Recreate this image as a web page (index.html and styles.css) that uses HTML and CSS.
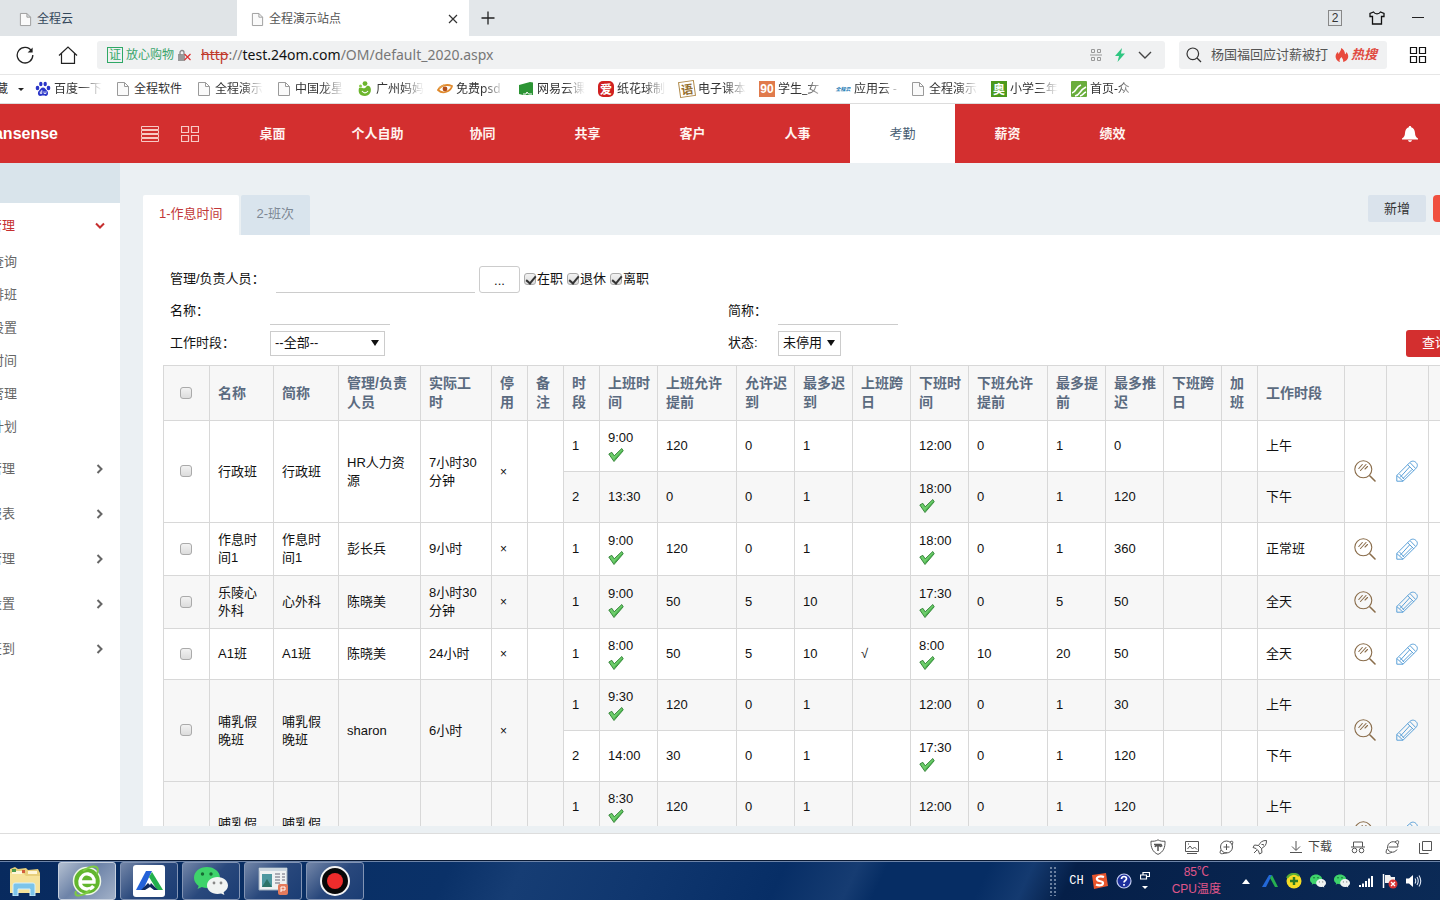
FILE: index.html
```html
<!DOCTYPE html>
<html lang="zh-CN">
<head>
<meta charset="utf-8">
<title>全程演示站点</title>
<link rel="stylesheet" href="styles.css">
</head>
<body>
<svg class="sprite" aria-hidden="true">
  <symbol id="i-page" viewBox="0 0 14 16"><path d="M1.5 1.5h7l4 4v9h-11z M8.5 1.5v4h4" fill="#fafafa" stroke="#9a9a9a"/></symbol>
  <symbol id="i-tick" viewBox="0 0 16 16"><path d="M.8 7 3.800 5.300l2.400 3.500L13.800 1.500 15.200 3.800 6 14.500z" fill="#6ccd6a" stroke="#2c7d31" stroke-width=".9" stroke-linejoin="round"/><path d="M6.300 12.600 14.500 3.800" fill="none" stroke="#3aa040" stroke-width=".9"/></symbol>
  <symbol id="i-view" viewBox="0 0 22 22"><g fill="none" stroke="#8a6d4b" stroke-width="1.100" stroke-linecap="round"><circle cx="9.300" cy="9.300" r="8.500"/><path d="m4.800 8.500 3.500-4m-1.800 6 5.500-6m-1 4.500 2.500-2.500"/><path d="m16 16 5 5" stroke-width="1.600"/></g></symbol>
  <symbol id="i-edit" viewBox="0 0 22 22"><g fill="none" stroke="#5aa0d8" stroke-width="1" stroke-linejoin="round"><path d="M.8 21.200V15.500L13.500 2.800C15.500.7 18 .6 20 2.500s1.600 4.300-.3 6.200L7 21.200z"/><path d="m.8 15.500 6.200 5.700M11.500 4.600l6.300 6.200M14 2.600l5.600 5.800M4 17.500l9.500-10.500M7 18.500l9-9M3.500 14 8 19"/></g></symbol>
  <symbol id="i-wechat" viewBox="0 0 34 28"><path d="M13 0C5.500 0 0 4.700 0 10.700c0 3.400 1.800 6.200 4.700 8.200L3.500 22l4.300-2c1.600.6 3.300.9 5.200.9 7.500 0 13-4.500 13-10.200S20.500 0 13 0z" fill="#3ed36b"/><circle cx="8.500" cy="7" r="1.700" fill="#176b33"/><circle cx="17" cy="7" r="1.700" fill="#176b33"/><path d="M23.500 10c-6 0-10.500 3.800-10.500 8.500s4.500 8.400 10.500 8.400c1.300 0 2.500-.2 3.600-.5l3.300 1.600-.8-2.800c2.700-1.600 4.400-4 4.400-6.700 0-4.700-4.500-8.500-10.500-8.500z" fill="#f0f3f2"/><circle cx="20" cy="16" r="1.400" fill="#888"/><circle cx="27" cy="16" r="1.400" fill="#888"/></symbol>
  <symbol id="i-chev" viewBox="0 0 8 10"><path d="m1.500 1 4 4-4 4" fill="none" stroke="currentColor" stroke-width="2"/></symbol>
</svg>

<div class="tabs">
  <div class="tab"><svg class="page"><use href="#i-page"/></svg><span>全程云</span></div>
  <div class="tab tab-on"><svg class="page"><use href="#i-page"/></svg><span>全程演示站点</span>
    <button class="plain tab-close" aria-label="关闭"><svg width="10" height="10"><path d="m1 1 8 8m0-8-8 8" stroke="#333" stroke-width="1.200"/></svg></button></div>
  <button class="plain tab-add" aria-label="新标签"><svg width="14" height="14"><path d="M7 .5v13M.5 7h13" stroke="#222" stroke-width="1.300"/></svg></button>
  <div class="win">
    <span class="win-count">2</span>
    <svg width="16" height="14" viewBox="0 0 16 14"><path d="M4.500 1 1 2.500v3h2.500V13h9V5.500H15v-3L11.500 1c-.8 1.200-2 1.800-3.500 1.800S5.300 2.200 4.500 1z" fill="none" stroke="#111" stroke-width="1.300"/></svg>
    <svg width="12" height="14"><path d="M0 6.500h12" stroke="#222"/></svg>
  </div>
</div>

<div class="address">
  <button class="plain" aria-label="刷新"><svg width="18" height="18" viewBox="0 0 18 18"><path d="M15.600 5A7.800 7.800 0 1 0 16.800 9" fill="none" stroke="#222" stroke-width="1.300"/><path d="M16.600 1.500v5h-5z" fill="#222"/></svg></button>
  <button class="plain" aria-label="主页"><svg width="20" height="18" viewBox="0 0 20 18"><path d="M1 9.500 10 1l9 8.500M3.500 7.500v9.800h13V7.500" fill="none" stroke="#222" stroke-width="1.200"/></svg></button>
  <div class="urlbox">
    <span class="cert">证</span><span class="safe">放心购物</span>
    <svg width="15" height="13" viewBox="0 0 15 13"><path d="M1 5h7v7H1z" fill="#999"/><path d="M3 6V3.500a2 2 0 0 1 4 0V5" fill="none" stroke="#888" stroke-width="1.300"/><path d="m7.500 5 6 6m0-6-6 6" stroke="#d33" stroke-width="1.200"/></svg>
    <span class="url"><s>http</s>://<b>test.24om.com</b>/OM/default_2020.aspx</span>
    <svg class="qr" width="12" height="12" viewBox="0 0 12 12"><path d="M1.500.5h3v3h-3zM7.500.5h3v3h-3zM1.500 8.500h3v3h-3zM7.500 8.500h3v3h-3zM0 6h12" fill="none" stroke="#999"/></svg>
    <svg width="12" height="14" viewBox="0 0 12 14"><path d="M8 0 1 8h4l-1.500 6L11 5.500H7z" fill="#2fc681"/></svg>
    <svg width="14" height="8" viewBox="0 0 14 8"><path d="m1 1 6 6 6-6" fill="none" stroke="#444" stroke-width="1.400"/></svg>
  </div>
  <div class="search">
    <svg width="16" height="16" viewBox="0 0 16 16"><circle cx="6.800" cy="6.800" r="5.800" fill="none" stroke="#333" stroke-width="1.200"/><path d="m11 11 4 4" stroke="#333" stroke-width="1.300"/></svg>
    <span class="search-text">杨国福回应讨薪被打</span>
    <svg width="14" height="14" viewBox="0 0 14 14"><path d="M6 0c.5 3-2 3.700-2 6-.8-.4-1-1.300-.9-2.200C1 5.500.3 7.500.7 9.500 1.200 12 3 13.700 5 14c-1.200-2 0-3.800 1.800-5 .1 1.500 1.800 2 1.400 5 2.600-.5 4.700-2.600 5-5 .2-2-.6-3.800-2-5 0 1.200-.5 2-1.200 2.200C10 3.500 8.500 1 6 0z" fill="#e8493c"/></svg>
    <em class="hot">热搜</em>
  </div>
  <button class="plain apps" aria-label="应用"><svg width="18" height="18" viewBox="0 0 18 18"><path d="M1.500 1.500h6v6h-6zM10.500 1.500h6v6h-6zM1.500 10.500h6v6h-6zM10.500 10.500h6v6h-6z" fill="none" stroke="#111" stroke-width="1.200"/></svg></button>
</div>

<nav class="bookmarks">
  <span class="fav">藏</span><span class="caret"></span>
  <a href="#" class="bm"><svg viewBox="0 0 16 16"><g fill="#2a35c8"><ellipse cx="2.500" cy="7" rx="1.800" ry="2.200"/><ellipse cx="5.800" cy="3" rx="1.700" ry="2.300"/><ellipse cx="10.200" cy="3" rx="1.700" ry="2.300"/><ellipse cx="13.500" cy="7" rx="1.800" ry="2.200"/><path d="M8 6.500c2 0 2.800 2 4 3.200 1.500 1.400 1.600 5-1.200 5.200-1.200 0-1.600-.4-2.800-.4s-1.600.4-2.800.4C2.400 14.700 2.500 11 4 9.700 5.200 8.500 6 6.500 8 6.500z"/></g><path d="M6.800 9v3.500H5.300v-1.600h1.500M9 10.300v2.200h2v-2.200" fill="none" stroke="#fff" stroke-width=".8"/></svg><span class="fade">百度一下</span></a>
  <a href="#" class="bm"><svg><use href="#i-page"/></svg><span>全程软件</span></a>
  <a href="#" class="bm"><svg><use href="#i-page"/></svg><span class="fade">全程演示</span></a>
  <a href="#" class="bm"><svg><use href="#i-page"/></svg><span class="fade">中国龙星</span></a>
  <a href="#" class="bm"><svg viewBox="0 0 16 16"><path d="M2 7c3-1 4 1 6 0s1-3 4-2c3 1 3 10-4 10C2 15 1 11 2 7z" fill="#6cb52d"/><circle cx="8" cy="2.600" r="2.400" fill="#6cb52d"/><circle cx="3.500" cy="5" r="1.500" fill="#8ccc4a"/><path d="M5 10c2 2.500 4 2.500 6 0" fill="none" stroke="#fff" stroke-width="1.200"/></svg><span class="fade">广州妈妈</span></a>
  <a href="#" class="bm"><svg viewBox="0 0 16 16"><path d="M1 9c3-5 9-6 14-4-1 5-9 9-14 4z" fill="none" stroke="#e08a2c" stroke-width="1.800"/><circle cx="8" cy="8" r="2.400" fill="#b4501c"/><path d="m2 7 5-3" stroke="#e6a04c" stroke-width="1.500"/></svg><span class="fade">免费psd</span></a>
  <a href="#" class="bm"><svg viewBox="0 0 16 16"><path d="M1 4 12 1l3 .5V14H5l-4-1z" fill="#2c9434"/><path d="M5 13h3l1-2 1.500 2H14" fill="none" stroke="#fff"/></svg><span class="fade">网易云课</span></a>
  <a href="#" class="bm"><i class="fi fi-ai">爱</i><span class="fade">纸花球制</span></a>
  <a href="#" class="bm"><i class="fi fi-yu">语</i><span class="fade">电子课本</span></a>
  <a href="#" class="bm bm-90"><i class="fi fi-90">90</i><span class="fade">学生_女</span></a>
  <a href="#" class="bm bm-cloud"><i class="fi fi-cloud">全程云</i><span class="fade">应用云 -</span></a>
  <a href="#" class="bm"><svg><use href="#i-page"/></svg><span class="fade">全程演示</span></a>
  <a href="#" class="bm"><i class="fi fi-ao">奥</i><span class="fade">小学三年</span></a>
  <a href="#" class="bm"><svg viewBox="0 0 16 16"><rect width="16" height="16" rx="1" fill="#6aad3c"/><path d="M1 12c5-1 3-6 9-8M4 15c6-1 3-5 11-9M9 15c4-1 3-3 6-4" fill="none" stroke="#fff" stroke-width="1.600"/></svg><span class="fade">首页-众</span></a>
</nav>

<header class="topbar">
  <div class="brand">Mansense</div>
  <button class="plain" aria-label="列表"><svg width="18" height="16" viewBox="0 0 18 16"><path d="M.5.5h17v3H.5zM.5 4.500h17v3H.5zM.5 8.500h17v3H.5zM.5 12.500h17v3H.5z" fill="none" stroke="#f8c9c5"/></svg></button>
  <button class="plain" aria-label="网格"><svg width="18" height="16" viewBox="0 0 18 16"><path d="M.5.5h7v6h-7zM10.500.5h7v6h-7zM.5 9.500h7v6h-7zM10.500 9.500h7v6h-7z" fill="none" stroke="#f8c9c5" stroke-width="1.200"/></svg></button>
  <nav class="menu">
    <a href="#">桌面</a><a href="#">个人自助</a><a href="#">协同</a><a href="#">共享</a><a href="#">客户</a><a href="#">人事</a><a href="#" class="on">考勤</a><a href="#">薪资</a><a href="#">绩效</a>
  </nav>
  <button class="plain bell" aria-label="通知"><svg width="16" height="16" viewBox="0 0 16 16"><path d="M8 0c.8 0 1.200.5 1.200 1.200C11.600 1.800 12.800 4 13 7c.2 3 .8 4 3 5.500v1H0v-1C2.200 11 2.800 10 3 7c.2-3 1.400-5.200 3.800-5.800C6.800.5 7.200 0 8 0zM6 14.300h4c-.3 1.100-1 1.700-2 1.700s-1.700-.6-2-1.700z" fill="#fff"/></svg></button>
</header>

<main class="body">
  <aside class="side">
    <div class="side-top"></div>
    <a href="#" class="s1 s1-on"><span>管理</span><svg class="down"><use href="#i-chev"/></svg></a>
    <div class="subs">
      <a href="#">查询</a><a href="#">排班</a><a href="#">设置</a><a href="#">时间</a><a href="#">管理</a><a href="#">计划</a>
    </div>
    <a href="#" class="s1"><span>管理</span><svg><use href="#i-chev"/></svg></a>
    <a href="#" class="s1"><span>报表</span><svg><use href="#i-chev"/></svg></a>
    <a href="#" class="s1"><span>管理</span><svg><use href="#i-chev"/></svg></a>
    <a href="#" class="s1"><span>设置</span><svg><use href="#i-chev"/></svg></a>
    <a href="#" class="s1"><span>签到</span><svg><use href="#i-chev"/></svg></a>
  </aside>

  <section class="content">
    <div class="ctabs">
      <a href="#" class="ctab ctab-on">1-作息时间</a>
      <a href="#" class="ctab">2-班次</a>
      <div class="acts"><button class="btn-add">新增</button><button class="btn-del" aria-label="删除"></button></div>
    </div>
    <div class="panel">
      <form class="filter">
        <label for="mgr">管理/负责人员<i class="colon">：</i></label>
        <div class="people">
          <input id="mgr" type="text" class="line line-mgr"><button type="button" class="pick">...</button>
          <label class="ck"><input type="checkbox" checked>在职</label><label class="ck"><input type="checkbox" checked>退休</label><label class="ck"><input type="checkbox" checked>离职</label>
        </div>
        <label for="nm">名称<i class="colon">：</i></label><div><input id="nm" type="text" class="line"></div>
        <label for="sn">简称<i class="colon">：</i></label><div><input id="sn" type="text" class="line"></div>
        <label for="pd">工作时段<i class="colon">：</i></label><div><span class="sel sel-pd"><select id="pd"><option>--全部--</option></select></span></div>
        <label for="st">状态:</label><div class="last"><span class="sel sel-st"><select id="st"><option>未停用</option></select></span><button type="button" class="btn-query">查询</button></div>
      </form>

      <table class="grid">
        <colgroup><col class="w46"><col class="w64"><col class="w65"><col class="w82"><col class="w71"><col class="w36"><col class="w36"><col class="w36"><col class="w58"><col class="w79"><col class="w58"><col class="w58"><col class="w58"><col class="w58"><col class="w79"><col class="w58"><col class="w58"><col class="w58"><col class="w36"><col class="w87"><col class="w42"><col class="w42"><col class="w42"></colgroup>
        <thead><tr><th class="c"><input type="checkbox" aria-label="全选"></th><th>名称</th><th>简称</th><th>管理/负责人员</th><th>实际工时</th><th>停用</th><th>备注</th><th>时段</th><th>上班时间</th><th>上班允许提前</th><th>允许迟到</th><th>最多迟到</th><th>上班跨日</th><th>下班时间</th><th>下班允许提前</th><th>最多提前</th><th>最多推迟</th><th>下班跨日</th><th>加班</th><th>工作时段</th><th></th><th></th><th></th></tr></thead>
        <tbody>
        <tr><td rowspan="2" class="c"><input type="checkbox" aria-label="行政班"></td><td rowspan="2">行政班</td><td rowspan="2">行政班</td><td rowspan="2">HR人力资源</td><td rowspan="2">7小时30分钟</td><td rowspan="2" class="x">×</td><td rowspan="2"></td><td>1</td><td>9:00<svg class="tick"><use href="#i-tick"/></svg></td><td>120</td><td>0</td><td>1</td><td></td><td>12:00</td><td>0</td><td>1</td><td>0</td><td></td><td></td><td>上午</td><td rowspan="2" class="c"><svg class="op"><use href="#i-view"/></svg></td><td rowspan="2" class="c"><svg class="op"><use href="#i-edit"/></svg></td><td rowspan="2"></td></tr>
        <tr><td>2</td><td>13:30</td><td>0</td><td>0</td><td>1</td><td></td><td>18:00<svg class="tick"><use href="#i-tick"/></svg></td><td>0</td><td>1</td><td>120</td><td></td><td></td><td>下午</td></tr>
        <tr class="tall"><td class="c"><input type="checkbox" aria-label="作息时间1"></td><td>作息时间1</td><td>作息时间1</td><td>彭长兵</td><td>9小时</td><td class="x">×</td><td></td><td>1</td><td>9:00<svg class="tick"><use href="#i-tick"/></svg></td><td>120</td><td>0</td><td>1</td><td></td><td>18:00<svg class="tick"><use href="#i-tick"/></svg></td><td>0</td><td>1</td><td>360</td><td></td><td></td><td>正常班</td><td class="c"><svg class="op"><use href="#i-view"/></svg></td><td class="c"><svg class="op"><use href="#i-edit"/></svg></td><td></td></tr>
        <tr class="tall"><td class="c"><input type="checkbox" aria-label="乐陵心外科"></td><td>乐陵心外科</td><td>心外科</td><td>陈晓美</td><td>8小时30分钟</td><td class="x">×</td><td></td><td>1</td><td>9:00<svg class="tick"><use href="#i-tick"/></svg></td><td>50</td><td>5</td><td>10</td><td></td><td>17:30<svg class="tick"><use href="#i-tick"/></svg></td><td>0</td><td>5</td><td>50</td><td></td><td></td><td>全天</td><td class="c"><svg class="op"><use href="#i-view"/></svg></td><td class="c"><svg class="op"><use href="#i-edit"/></svg></td><td></td></tr>
        <tr><td class="c"><input type="checkbox" aria-label="A1班"></td><td>A1班</td><td>A1班</td><td>陈晓美</td><td>24小时</td><td class="x">×</td><td></td><td>1</td><td>8:00<svg class="tick"><use href="#i-tick"/></svg></td><td>50</td><td>5</td><td>10</td><td>√</td><td>8:00<svg class="tick"><use href="#i-tick"/></svg></td><td>10</td><td>20</td><td>50</td><td></td><td></td><td>全天</td><td class="c"><svg class="op"><use href="#i-view"/></svg></td><td class="c"><svg class="op"><use href="#i-edit"/></svg></td><td></td></tr>
        <tr><td rowspan="2" class="c"><input type="checkbox" aria-label="哺乳假晚班"></td><td rowspan="2">哺乳假晚班</td><td rowspan="2">哺乳假晚班</td><td rowspan="2">sharon</td><td rowspan="2">6小时</td><td rowspan="2" class="x">×</td><td rowspan="2"></td><td>1</td><td>9:30<svg class="tick"><use href="#i-tick"/></svg></td><td>120</td><td>0</td><td>1</td><td></td><td>12:00</td><td>0</td><td>1</td><td>30</td><td></td><td></td><td>上午</td><td rowspan="2" class="c"><svg class="op"><use href="#i-view"/></svg></td><td rowspan="2" class="c"><svg class="op"><use href="#i-edit"/></svg></td><td rowspan="2"></td></tr>
        <tr><td>2</td><td>14:00</td><td>30</td><td>0</td><td>1</td><td></td><td>17:30<svg class="tick"><use href="#i-tick"/></svg></td><td>0</td><td>1</td><td>120</td><td></td><td></td><td>下午</td></tr>
        <tr><td rowspan="2" class="c"><input type="checkbox" aria-label="哺乳假早班"></td><td rowspan="2">哺乳假早班</td><td rowspan="2">哺乳假早班</td><td rowspan="2">sharon</td><td rowspan="2">6小时</td><td rowspan="2" class="x">×</td><td rowspan="2"></td><td>1</td><td>8:30<svg class="tick"><use href="#i-tick"/></svg></td><td>120</td><td>0</td><td>1</td><td></td><td>12:00</td><td>0</td><td>1</td><td>120</td><td></td><td></td><td>上午</td><td rowspan="2" class="c"><svg class="op"><use href="#i-view"/></svg></td><td rowspan="2" class="c"><svg class="op"><use href="#i-edit"/></svg></td><td rowspan="2"></td></tr>
        <tr><td>2</td><td>14:00</td><td>30</td><td>0</td><td>1</td><td></td><td>17:30</td><td>0</td><td>1</td><td>120</td><td></td><td></td><td>下午</td></tr>
        </tbody>
      </table>
    </div>
  </section>
</main>

<div class="status">
  <svg width="16" height="16" viewBox="0 0 16 16"><path d="M8 .8c2 1.400 4.500 1.600 7 1.400.3 6-1.500 10.800-7 13.200C2.500 13 .7 8.200 1 2.200 3.500 2.400 6 2.200 8 .8z"/><path d="M4 5.500h7l1 2M8 5.500V12M5 8c.5-2 5-2 6 0" stroke-width="1.500"/></svg>
  <svg width="16" height="16" viewBox="0 0 16 16"><path d="M1.500 2.500h13v10h-13zM3 14.500h10M3.500 10l2.500-3 2.500 3 2-2 2.500 2.500M4 5h1"/></svg>
  <svg width="16" height="16" viewBox="0 0 16 16"><circle cx="8.500" cy="8" r="6"/><path d="M8.500 5v6M5.500 8h6M3 11c-3 5 2 4 6 2.500M12 3c3-2 3.500 0 2 3"/></svg>
  <svg width="16" height="16" viewBox="0 0 16 16"><path d="M14.500 1.500c-4-.2-6 1.500-8 5l3 3c3.500-2 5.200-4 5-8zM6.500 6.500l-4-.5L1 8.500l3 1 2.500 2.500 1 3 2.500-1.500-.5-4M2 14l3-3M9.500 5.500h2v1"/></svg>
  <span class="dl"><svg width="12" height="14" viewBox="0 0 12 14"><path d="M6 1v9M2 6.500l4 4 4-4M0 12.500h12"/></svg>下载</span>
  <svg width="16" height="16" viewBox="0 0 16 16"><path d="M1 8h14M3.500 8V3h9v5"/><circle cx="4.500" cy="11.500" r="2.300"/><circle cx="11.500" cy="11.500" r="2.300"/></svg>
  <svg width="16" height="16" viewBox="0 0 16 16"><path d="M4.500 8H14c0-7-9-7-10.500-.5C2.500 13 10 15.500 13 10.500M3 10c-3 6 2 5 5 3M11 3c4-3 4.500-.5 2.500 3"/></svg>
  <svg width="14" height="16" viewBox="0 0 14 16"><path d="M4.500 2.500h9v9h-9zM1.500 4v10.500h9"/></svg>
</div>

<footer class="taskbar">
  <button class="plain task-first" aria-label="资源管理器"><svg width="34" height="30" viewBox="0 0 34 30"><path d="M2 3l5-2 3 2 8-1 2 2 10-1 2 4v19L2 27z" fill="#e8cf7c"/><path d="M2 7h13l3 3h14v17H2z" fill="#f6e29a"/><path d="M4 5h10v3H4zM20 5h9v3h-9z" fill="#fff6d8"/><path d="M4 3h4v3H4z" fill="#4c9a4c"/><path d="M14 4h3v3h-3z" fill="#d35d3c"/><path d="M5 30V19q0-2 2-2h18q2 0 2 2v11h-5v-7H10v7z" fill="#7cc4ea" stroke="#d4f0fc"/></svg></button>
  <button class="task task-on" aria-label="浏览器"><svg width="32" height="32" viewBox="0 0 32 32"><circle cx="16" cy="16" r="13.500" fill="#62b62e" stroke="#eef7e6" stroke-width="1.500"/><path d="M10 17h13c1-9-12-12-14-1-.5 9 10 10 13.500 5" fill="none" stroke="#fff" stroke-width="3.400"/><path d="M5 26C2 34 14 30 19 25M12 6c8-6 18-7 14 3" fill="none" stroke="#7dcb43" stroke-width="2"/></svg></button>
  <button class="task" aria-label="全程云"><svg width="32" height="32" viewBox="0 0 32 32"><rect width="32" height="32" rx="3" fill="#fff"/><path d="M3 25 13 6h6l-9 19z" fill="#2462d8"/><path d="m16 12 3-5 11 18h-6z" fill="#22b04c"/><path d="m8 25 7-7 2 2 1-2 7 7h-4l-4-3-5 3z" fill="#102a5c"/></svg></button>
  <button class="task" aria-label="微信"><svg width="34" height="28"><use href="#i-wechat"/></svg></button>
  <button class="task" aria-label="演示"><svg width="30" height="28" viewBox="0 0 30 28"><path d="M1 1h28v22H1z" fill="#eef1f2" stroke="#9ab"/><path d="M1 1h28v3H1z" fill="#cbd6de"/><path d="M4 7h10v13H4z" fill="#4d98a0"/><path d="m4 20 5-8 5 8z" fill="#2d7468"/><path d="M17 7h5M17 10h5M17 13h5M17 16h5M24 7h3M24 10h3M24 13h3" stroke="#667"/><rect x="20" y="17" width="10" height="11" rx="2" fill="#e47a5c"/><path d="M23 25v-5h4v3h-4" fill="none" stroke="#fff"/></svg></button>
  <button class="task" aria-label="录制"><svg width="32" height="32" viewBox="0 0 32 32"><circle cx="16" cy="16" r="14" fill="#080808" stroke="#f4f4f4" stroke-width="2"/><circle cx="16" cy="16" r="8" fill="#ee2c2c"/></svg></button>
  <div class="tray">
    <span class="grip"></span>
    <span class="ime">CH</span>
    <svg width="16" height="16" viewBox="0 0 16 16"><path d="M0 2 14 0l2 13-14 3z" fill="#e8552c"/><path d="M12 4C8 2.500 4 4 5 6.500s6 1 6 3.500-4 3-7 1.500" fill="none" stroke="#fff" stroke-width="2.200"/></svg>
    <svg width="16" height="16" viewBox="0 0 16 16"><circle cx="8" cy="8" r="7" fill="#1c2f9c" stroke="#c4cdf0" stroke-width="1.200"/><path d="M5.500 6c0-3.300 5-3.300 5-.3C10.500 7.500 8 7.500 8 9.500M8 11v1.800" fill="none" stroke="#fff" stroke-width="1.700"/></svg>
    <svg width="10" height="18" viewBox="0 0 10 18"><path d="M3 3V.5h6.500v4H7M.5 3h6v4h-6z" fill="none" stroke="#fff" stroke-width="1.200"/><path d="M2 14h6l-3 3z" fill="#fff"/></svg>
    <span class="temp">85℃<br>CPU温度</span>
    <svg width="8" height="5"><path d="M0 5h8L4 0z" fill="#fff"/></svg>
    <svg class="tray-a" width="16" height="14" viewBox="0 0 16 14"><path d="M0 13 7 1h3L4 13z" fill="#2368d8"/><path d="m8 4 2-3 6 12h-3z" fill="#27b050"/></svg>
    <svg width="16" height="16" viewBox="0 0 16 16"><circle cx="8" cy="8" r="7.500" fill="#f4dc24"/><path d="M1 5a7.500 7.500 0 0 1 12-2" fill="none" stroke="#58ac34" stroke-width="2"/><path d="M8 4v8M4 8h8" stroke="#2c7a24" stroke-width="2.400"/></svg>
    <svg width="16" height="14"><use href="#i-wechat"/></svg>
    <svg width="16" height="14"><use href="#i-wechat"/></svg>
    <svg width="16" height="12" viewBox="0 0 16 12"><path d="M2 12v-2M5 12V8.500M8 12V6M11 12V3.500M14 12V1" stroke="#fff" stroke-width="2"/></svg>
    <svg width="16" height="16" viewBox="0 0 16 16"><path d="M1.500 1v14" stroke="#fff" stroke-width="1.500"/><path d="M3 2h5l1 2h4v6H3z" fill="#f2f2f2"/><circle cx="11" cy="11" r="4.500" fill="#d83434"/><path d="m9 9 4 4m0-4-4 4" stroke="#fff" stroke-width="1.300"/></svg>
    <svg width="16" height="14" viewBox="0 0 16 14"><path d="M0 4.500h3L7 1v12L3 9.500H0z" fill="#fff"/><path d="M9 4.500q1.500 2.500 0 5M11 3q2.500 4 0 8M13 1.500q3.500 5.500 0 11" fill="none" stroke="#dde6f4" stroke-width="1.100"/></svg>
  </div>
</footer>
</body>
</html>
```
FILE: styles.css
```css
* { box-sizing: border-box; }
body {
  margin: 0;
  height: 100vh;
  display: flex;
  flex-direction: column;
  overflow: hidden;
  background: #fff;
  color: #111;
  font: 13px/18px "Liberation Sans", "Noto Sans CJK SC", sans-serif;
}
a { color: inherit; text-decoration: none; }
button, input, select { font: inherit; color: inherit; }
svg { display: block; flex: none; }
.sprite { position: absolute; width: 0; height: 0; }
.plain { border: 0; padding: 0; background: none; display: flex; flex: none; }

/* browser tabs */
.tabs { display: flex; height: 36px; flex: none; background: #e3e7ea; font-size: 12px; color: #33475b; }
.tab { display: flex; align-items: center; gap: 5px; width: 237px; padding: 2px 11px 0 19px; background: #e0e4e7; }
.tab-on { width: 232px; padding-left: 14px; background: #fff; color: #555; }
.page { width: 13px; height: 15px; }
.tab-close { margin-left: auto; }
.tab-add { align-self: center; margin-left: 12px; }
.win { margin-left: auto; display: flex; align-items: center; gap: 27px; padding-right: 16px; }
.win-count { width: 14px; height: 16px; border: 1px solid #888; line-height: 14px; text-align: center; color: #333; }

/* address row */
.address { display: flex; align-items: center; flex: none; height: 39px; padding: 0 13px 0 16px; gap: 24px; border-bottom: 1px solid #e6e6e6; }
.urlbox, .search { display: flex; align-items: center; height: 28px; border-radius: 3px; background: #f0f1f2; }
.urlbox { flex: 1; gap: 3px; margin-left: -5px; padding: 0 13px 0 10px; }
.cert { width: 16px; height: 16px; border: 1px solid #2fa866; color: #2fa866; font-size: 12px; line-height: 14px; text-align: center; }
.safe { font-size: 12px; color: #3aa56c; }
.url { margin-left: 6px; font: 14px/20px "Noto Sans", sans-serif; color: #777; }
.url s { color: #c0392b; }
.url b { font-weight: 400; color: #111; }
.qr { margin-left: auto; }
.urlbox .qr ~ svg { margin-left: 9px; }
.search { width: 208px; margin-left: -10px; padding: 0 9px 0 7px; gap: 7px; }
.search-text { color: #555; margin-left: 2px; }
.hot { margin-left: -5px; color: #e04a40; font-weight: 700; white-space: nowrap; }
.apps { margin-left: -2px; }

/* bookmarks */
.bookmarks { display: flex; align-items: center; flex: none; height: 29px; overflow: hidden; border-bottom: 1px solid #ddd; font: 12px/18px "Noto Sans", "Noto Sans CJK SC", sans-serif; color: #333; }
.fav { width: 8px; height: 18px; display: flex; justify-content: flex-end; overflow: hidden; }
.fav, .bm span { white-space: nowrap; }
.caret { margin: 0 11px 0 10px; border: 3px solid transparent; border-top-color: #222; border-bottom: 0; }
.bm { display: flex; align-items: center; gap: 3px; flex: none; margin-right: 13px; }
.bm svg, .fi { width: 16px; height: 16px; flex: none; }
.bm span { width: 48px; overflow: hidden; }
.bm:nth-of-type(even) span { width: 49px; }
.bm-cloud, .bm-90 { margin-right: 8px; }
.fade { mask-image: linear-gradient(to right, #000 55%, transparent); }
.fi { font: 700 12px/16px "Noto Sans CJK SC", sans-serif; text-align: center; color: #fff; overflow: hidden; white-space: nowrap; }
.fi-ai { border-radius: 5px; background: #d02020; }
.fi-yu { border: 1px solid #b08a4a; color: #96702f; line-height: 14px; transform: rotate(-8deg); }
.fi-90 { background: #e07a4c; font-family: "Liberation Sans", sans-serif; }
.fi-cloud { color: #1a7ab4; font-size: 5px; font-style: italic; }
.fi-ao { background: #4c9a1c; }

/* application header */
.topbar { display: flex; align-items: center; flex: none; height: 59px; background: #d32f2f; color: #fff; }
.brand { width: 58px; margin-right: 83px; display: flex; justify-content: flex-end; overflow: hidden; font: 700 16px/20px "Liberation Sans", sans-serif; }
.topbar .plain + .plain { margin-left: 22px; }
.menu { display: flex; align-self: stretch; margin-left: 21px; font-weight: 700; color: #fff3f0; }
.menu a { width: 105px; display: flex; align-items: center; justify-content: center; }
.menu .on { background: #fff; color: #4a5f74; font-weight: 400; }
.bell { margin: 0 22px 0 auto; }

/* body */
.body { display: flex; flex: 1; min-height: 0; background: #ebf0f3; }
.side { width: 120px; flex: none; background: #fff; color: #666; overflow: hidden; }
.side-top { height: 40px; background: #d9e4eb; }
.s1 { display: flex; align-items: center; justify-content: space-between; height: 45px; padding-right: 16px; }
.s1 span, .subs a { display: flex; justify-content: flex-end; width: 15px; overflow: hidden; white-space: nowrap; }
.s1 svg { width: 8px; height: 10px; }
.s1-on { height: 42px; padding-top: 3px; color: #c62f2f; }
.s1 .down { transform: rotate(90deg); }
.subs { margin-bottom: 3px; }
.subs a { width: 17px; height: 33px; align-items: center; }
.content { flex: 1; min-width: 0; display: flex; flex-direction: column; padding: 32px 0 7px 23px; overflow: hidden; }
.ctabs { display: flex; flex: none; height: 40px; gap: 2px; }
.ctab { padding: 0 16px; line-height: 38px; background: #d9e4ed; color: #7d8894; border-radius: 2px 2px 0 0; }
.ctab-on { background: #fff; color: #c23838; }
.acts { display: flex; gap: 7px; height: 27px; margin: 0 -51px 0 auto; }
.btn-add, .btn-del { width: 58px; border: 0; border-radius: 2px; background: #dae3ec; color: #333; }
.btn-del { background: #f0503f; border-radius: 4px; }
.panel { flex: 1; min-height: 0; overflow: hidden; padding: 28px 0 0 20px; background: #fff; }

.filter { display: grid; grid-template-columns: 100px 458px 50px 1fr; grid-auto-rows: 32px; align-items: center; padding: 0 0 6px 7px; }
.colon { font-family: "Noto Sans CJK TC", sans-serif; font-style: normal; line-height: 1; }
.people { grid-column: 2 / -1; display: flex; align-items: center; }
.line { display: block; width: 120px; height: 27px; border: 0; border-bottom: 1px solid #ccc; padding: 0 4px; background: none; outline: 0; }
.line-mgr { width: 199px; margin: 0 4px 0 6px; }
.pick { width: 41px; height: 27px; margin-right: 4px; padding: 4px 0 0; border: 1px solid #ccc; border-radius: 3px; background: #fff; }
.ck { display: flex; align-items: center; gap: 1px; margin-right: 4px; }
input[type="checkbox"] { appearance: none; position: relative; flex: none; display: block; width: 12px; height: 12px; margin: 0; border: 1px solid #aaa; border-radius: 3px; background: linear-gradient(#f2f2f2, #dcdcdc); }
input[type="checkbox"]:checked::after { content: ""; position: absolute; left: 3px; top: 0; width: 4px; height: 8px; border: solid #333; border-width: 0 2px 2px 0; transform: rotate(40deg); }
.sel { position: relative; display: block; height: 25px; }
.sel select { appearance: none; width: 100%; height: 100%; padding: 0 4px; border: 1px solid #ccc; border-radius: 0; background: #fff; }
.sel::after { content: ""; position: absolute; right: 6px; top: 9px; border: 4px solid transparent; border-top: 6px solid #111; border-bottom: 0; pointer-events: none; }
.sel-pd { width: 115px; }
.sel-st { width: 63px; }
.last { display: flex; align-items: center; justify-content: space-between; margin-right: -24px; }
.btn-query { width: 58px; height: 27px; border: 0; border-radius: 3px; background: #d32f2f; color: #fff; }

.grid { table-layout: fixed; width: 1307px; border-collapse: collapse; }
.w36 { width: 36px; } .w42 { width: 42px; } .w46 { width: 46px; } .w58 { width: 58px; }
.w64 { width: 64px; } .w65 { width: 65px; } .w71 { width: 71px; } .w79 { width: 79px; }
.w82 { width: 82px; } .w87 { width: 87px; }
.grid th, .grid td { border: 1px solid #d8d8d8; padding: 0 7px 0 8px; text-align: left; vertical-align: middle; word-break: break-all; }
.grid th { height: 55px; background: #f7f7f7; color: #5b6b80; font-size: 14px; line-height: 19px; }
.grid td { height: 51px; background: #fff; }
.grid .tall td { height: 53px; }
.grid tbody tr:nth-child(even) td { background: #f7f7f7; }
.grid .c { padding: 0 1px 1px 0; }
.grid .c input { margin: 0 auto; }
.grid .x { font-size: 12px; }
.tick { width: 16px; height: 16px; }
.op { width: 22px; height: 22px; margin: 0 auto; }

/* browser status strip */
.status { display: flex; align-items: center; justify-content: flex-end; gap: 18px; flex: none; height: 27px; padding-right: 8px; border-top: 1px solid #ddd; background: #fff; font-size: 12px; color: #444; }
.status svg { fill: none; stroke: #555; }
.dl { display: flex; align-items: center; gap: 6px; margin-left: 4px; }

/* desktop taskbar */
.taskbar { display: flex; align-items: center; flex: none; height: 40px; padding: 1px 0 0 8px; border-top: 1px solid #0a1a34; gap: 4px; background: linear-gradient(115deg, #082a5e 0%, #0a3168 31%, #163d74 36%, #10376f 44%, #072e66 54%, #163c72 59%, #062d64 61%, #062d64 68%, #143a70 71%, #051f48 74%, #0b2a56 100%); box-shadow: inset 0 1px #6d84a8; }
.task-first { margin-right: 12px; }
.task { width: 58px; height: 38px; display: flex; flex: none; align-items: center; justify-content: center; padding: 0; border: 1px solid #8294b4; border-radius: 3px; background: linear-gradient(135deg, #7386a8, #29487c 50%, #1b3d74); }
.task-on { border-color: #c6d0de; background: linear-gradient(135deg, #b3bfd0, #6d83a8 45%, #a2b1c8); }
.tray { display: flex; align-items: center; gap: 8px; margin-left: auto; padding-right: 18px; color: #fff; }
.grip { width: 8px; height: 30px; background: radial-gradient(circle, #6a7f9f 1px, transparent 1px) 0 0 / 4px 4px; }
.ime { margin-left: 4px; font: 12px/16px "Liberation Mono", monospace; }
.temp { margin: 0 13px 0 14px; text-align: center; font-size: 12px; line-height: 17px; color: #e0568a; }
.tray-a { margin-left: 4px; }
```
